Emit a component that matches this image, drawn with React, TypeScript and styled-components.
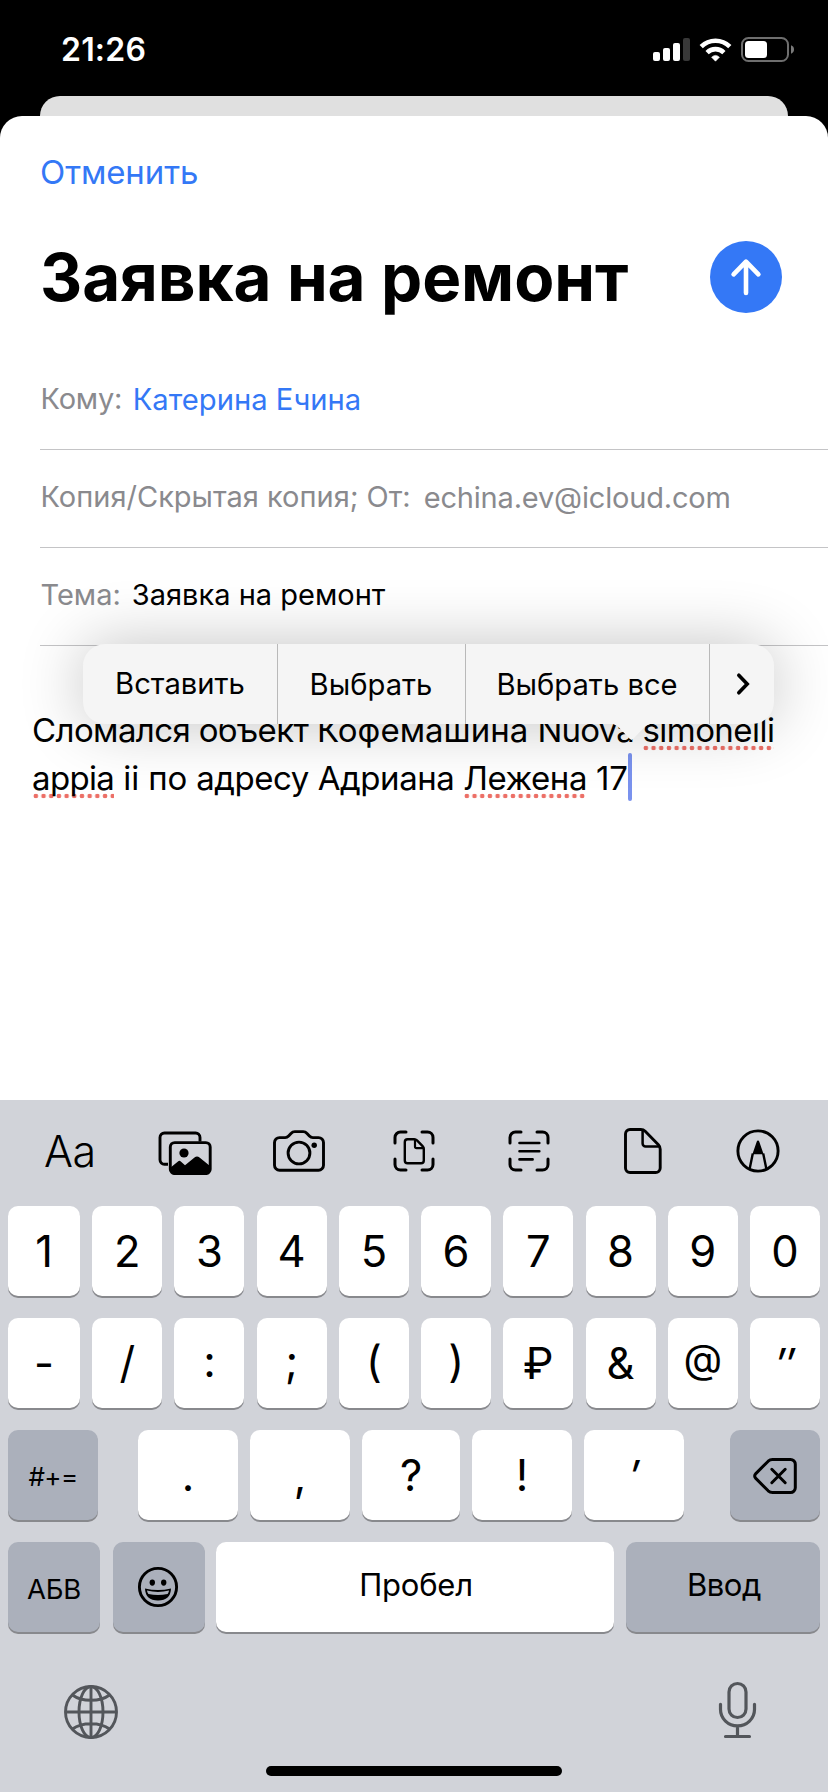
import React from "react";
import styled, { createGlobalStyle, css } from "styled-components";

const GlobalStyle = createGlobalStyle`
  html, body { margin: 0; padding: 0; background: #000; }
  * { box-sizing: border-box; }
  body {
    font-family: Inter, "Liberation Sans", sans-serif;
    -webkit-font-smoothing: antialiased;
  }
`;

const blue = "#3478f6";
const grey = "#8a8a8e";

const Screen = styled.div`
  width: 828px;
  height: 1792px;
  display: flex;
  flex-direction: column;
  background: #000;
  overflow: hidden;
`;

const StatusBar = styled.header`
  height: 96px;
  flex: none;
  display: flex;
  align-items: center;
  justify-content: space-between;
  padding: 3px 34px 0 61px;
  color: #fff;
`;

const Txt = styled.span<{
  $size: number;
  $track?: number;
  $weight?: number;
  $color?: string;
  $dy?: number;
  $italic?: boolean;
}>`
  font-size: ${(p) => p.$size}px;
  letter-spacing: ${(p) => p.$track ?? 0}px;
  font-weight: ${(p) => p.$weight ?? 400};
  font-style: ${(p) => (p.$italic ? "italic" : "normal")};
  color: ${(p) => p.$color ?? "inherit"};
  white-space: nowrap;
  line-height: 1.2;
  ${(p) => p.$dy && css`transform: translateY(${p.$dy}px);`}
`;

const BackCard = styled.div`
  height: 20px;
  flex: none;
  margin: 0 40px;
  background: #e0e0e0;
  border-radius: 20px 20px 0 0;
`;

const Sheet = styled.main`
  position: relative;
  height: 984px;
  flex: none;
  display: flex;
  flex-direction: column;
  background: #fff;
  border-radius: 22px 22px 0 0;
`;

const CancelButton = styled.button`
  align-self: flex-start;
  height: 40px;
  margin: 37px 0 0 40px;
  padding: 0;
  border: 0;
  background: none;
  font-family: inherit;
  display: flex;
  align-items: center;
  color: ${blue};
`;

const Heading = styled.div`
  height: 80px;
  margin: 44px 46px 35px 40px;
  display: flex;
  align-items: center;
  justify-content: space-between;
`;

const Title = styled.h1`
  margin: 0;
  padding-top: 1px;
  font-size: 65.5px;
  line-height: 80px;
  font-weight: 700;
  letter-spacing: -0.1px;
  white-space: nowrap;
`;

const SendButton = styled.button`
  width: 72px;
  height: 72px;
  padding: 0;
  border: 0;
  border-radius: 50%;
  background: ${blue};
  display: flex;
  align-items: center;
  justify-content: center;
`;

const Field = styled.div<{ $gap: number }>`
  height: 98px;
  margin-left: 40px;
  padding: 0 0 2px 0.5px;
  border-bottom: 1px solid #c4c4c6;
  display: flex;
  align-items: center;
  gap: ${(p) => p.$gap}px;
`;

const MessageBody = styled.div`
  padding: 60px 0 0 32px;
  color: #000;
`;

const Line = styled.div`
  height: 48px;
  display: flex;
  align-items: center;
  font-size: 33px;
  line-height: 48px;
  white-space: pre;
`;

const Run = styled.span<{ $track: number }>`
  letter-spacing: ${(p) => p.$track}px;
`;

const Misspelt = styled(Run)`
  height: 48px;
  background: radial-gradient(circle at center, #ec6f66 2px, transparent 2.6px) 0 39px / 7.7px 6px repeat-x;
`;

const Caret = styled.span`
  width: 4px;
  height: 48px;
  margin-bottom: 3px;
  border-radius: 2px;
  background: #7a92ee;
`;

const EditMenu = styled.div`
  position: absolute;
  left: 83px;
  top: 528px;
  width: 691px;
  height: 80px;
  display: flex;
  border-radius: 22px;
  background: #f5f5f5;
  box-shadow: 0 0 64px rgba(0, 0, 0, 0.24);
`;

const MenuItem = styled.div<{ $w: number; $pad?: string }>`
  width: ${(p) => p.$w}px;
  padding: ${(p) => p.$pad ?? "0"};
  display: flex;
  align-items: center;
  justify-content: center;
  color: #000;
  & + & { border-left: 1px solid #b9b9b9; }
`;

const MenuPointer = styled.div`
  position: absolute;
  left: 530px;
  top: 80px;
  width: 37px;
  height: 16px;
  background: #f5f5f5;
  clip-path: polygon(0 0, 100% 0, 88% 12%, 55% 92%, 50% 100%, 45% 92%, 12% 12%);
`;

const Keyboard = styled.section`
  flex: 1;
  display: flex;
  flex-direction: column;
  background: #d1d3d9;
`;

const Toolbar = styled.div`
  height: 106px;
  padding: 0 12.5px 4px;
  display: flex;
`;

const Tool = styled.div<{ $drop?: number }>`
  flex: 1;
  padding-top: ${(p) => p.$drop ?? 0}px;
  display: flex;
  align-items: center;
  justify-content: center;
`;

const KeyRow = styled.div<{ $spread?: boolean }>`
  height: 90px;
  margin-bottom: 22px;
  padding: 0 8px;
  display: flex;
  justify-content: ${(p) => (p.$spread ? "space-between" : "flex-start")};
`;

const KeyGroup = styled.div`
  display: flex;
  gap: 12px;
  margin: 0 46px 0 40px;
`;

const Key = styled.div<{ $w: number; $dark?: boolean; $ml?: number; $pad?: string }>`
  width: ${(p) => p.$w}px;
  height: 90px;
  flex: none;
  margin-left: ${(p) => p.$ml ?? 0}px;
  padding: ${(p) => p.$pad ?? "0"};
  display: flex;
  align-items: center;
  justify-content: center;
  border-radius: 10px;
  background: ${(p) => (p.$dark ? "#abb0bb" : "#fff")};
  box-shadow: 0 2px 0 #88898d;
  color: #000;
`;

const BottomBar = styled.div`
  height: 112px;
  display: flex;
  align-items: center;
  justify-content: space-between;
  padding: 0 71px 0 63px;
`;

const HomeIndicator = styled.div`
  width: 296px;
  height: 10px;
  margin: 0 auto;
  border-radius: 5px;
  background: #000;
`;

const StatusIcons = () => (
  <svg width="142" height="26" viewBox="652 37 142 26" fill="none">
    <g fill="#fff">
      <rect x="653" y="52" width="7" height="9" rx="2" />
      <rect x="663" y="48" width="7" height="13" rx="2" />
      <rect x="673" y="43" width="7" height="18" rx="2" />
      <rect x="683" y="38" width="7" height="23" rx="2" fillOpacity=".22" />
      <path d="M715.5 61.2 L711.6 57.2 Q715.5 53.6 719.4 57.2 Z" stroke="#fff" strokeWidth=".6" strokeLinejoin="round" />
    </g>
    <g stroke="#fff" strokeWidth="4.6">
      <path d="M701.2 46.6 A20.4 20.4 0 0 1 729.8 46.6" />
      <path d="M707.1 52.6 A12 12 0 0 1 723.9 52.6" />
    </g>
    <rect x="742" y="38" width="46" height="23" rx="6.5" stroke="#6e6e6e" strokeWidth="2" />
    <rect x="745" y="41" width="22" height="17" rx="3.5" fill="#fff" />
    <path d="M791 45.3 Q794 46.4 794 49.5 Q794 52.6 791 53.7 Z" fill="#7a7a7a" />
  </svg>
);

const ArrowUp = () => (
  <svg width="36" height="40" viewBox="0 0 36 40" fill="none" stroke="#fff" strokeWidth="4.6" strokeLinecap="round" strokeLinejoin="round">
    <path d="M18 36V4.8M5.6 17.4L18 4.6L30.4 17.4" />
  </svg>
);

const Chevron = () => (
  <svg width="16" height="26" viewBox="0 0 16 26" fill="none" stroke="#000" strokeWidth="3.6" strokeLinecap="round" strokeLinejoin="miter">
    <path d="M3.8 4.2L12.2 13L3.8 21.8" />
  </svg>
);

const PhotosIcon = () => (
  <svg width="54" height="44" viewBox="0 0 54 44" fill="none" stroke="#000" strokeWidth="2.9" strokeLinejoin="round">
    <path d="M42 10.5V6.4A4.4 4.4 0 0 0 37.6 2H6.4A4.4 4.4 0 0 0 2 6.4V28.8A4.4 4.4 0 0 0 6.4 33.2H10" />
    <rect x="12.3" y="11.6" width="39.9" height="31" rx="4.4" />
    <circle cx="26" cy="22" r="4.6" fill="#000" stroke="none" />
    <path d="M12.6 36.5L20 30.4Q21.4 29.2 22.8 30.4L27 34.2L36.5 26.4Q39 24.6 41.5 26.4L52 35V39Q52 42.6 47.5 42.6H17Q12.6 42.6 12.6 38.5Z" fill="#000" stroke="none" />
  </svg>
);

const CameraIcon = () => (
  <svg width="52" height="42" viewBox="0 0 52 42" fill="none" stroke="#000" strokeWidth="2.9" strokeLinejoin="round">
    <path d="M6.5 7.6H12.2Q14.2 7.6 15.6 6.1L18.2 3.3Q19.7 1.6 21.8 1.6H30.2Q32.3 1.6 33.8 3.3L36.4 6.1Q37.8 7.6 39.8 7.6H45.5A5 5 0 0 1 50.5 12.6V35.3A5 5 0 0 1 45.5 40.3H6.5A5 5 0 0 1 1.5 35.3V12.6A5 5 0 0 1 6.5 7.6Z" />
    <circle cx="26" cy="23" r="10.9" />
    <circle cx="41.2" cy="15.2" r="2.7" fill="#000" stroke="none" />
  </svg>
);

const corners = "M2 13V7.5A5.5 5.5 0 0 1 7.5 2H13M29 2H34.5A5.5 5.5 0 0 1 40 7.5V13M40 29V34.5A5.5 5.5 0 0 1 34.5 40H29M13 40H7.5A5.5 5.5 0 0 1 2 34.5V29";

const ScanDocumentIcon = () => (
  <svg width="42" height="42" viewBox="0 0 42 42" fill="none" stroke="#000" strokeLinecap="round" strokeLinejoin="round">
    <path strokeWidth="3" d={corners} />
    <path strokeWidth="2.4" d="M14.6 9.2H21.2Q22.8 9.2 24 10.4L29.6 16.2Q30.8 17.4 30.8 19V30.4A2.8 2.8 0 0 1 28 33.2H14.6A2.8 2.8 0 0 1 11.8 30.4V12A2.8 2.8 0 0 1 14.6 9.2Z" />
    <path strokeWidth="2.2" d="M22 9.8V16.6A1.6 1.6 0 0 0 23.6 18.2H30.4" />
  </svg>
);

const ScanTextIcon = () => (
  <svg width="42" height="42" viewBox="0 0 42 42" fill="none" stroke="#000" strokeLinecap="round" strokeLinejoin="round" strokeWidth="3">
    <path d={corners} />
    <path strokeWidth="2.6" d="M11.5 13H31.3M11.5 21.2H31.3M11.5 29.4H24.6" />
  </svg>
);

const FileIcon = () => (
  <svg width="38" height="46" viewBox="0 0 38 46" fill="none" stroke="#000" strokeWidth="2.9" strokeLinejoin="round">
    <path d="M6 1.5H16.8Q19.4 1.5 21.2 3.3L34.4 16.8Q36.2 18.6 36.2 21.2V40A4.5 4.5 0 0 1 31.7 44.5H6A4.5 4.5 0 0 1 1.5 40V6A4.5 4.5 0 0 1 6 1.5Z" />
    <path strokeWidth="2.5" d="M18.6 2V15.5A3 3 0 0 0 21.6 18.5H35.4" />
  </svg>
);

const MarkupIcon = () => (
  <svg width="44" height="44" viewBox="0 0 44 44" fill="none" stroke="#000" strokeWidth="2.9">
    <circle cx="22" cy="22" r="20.1" />
    <path d="M22 11.5Q22.9 11.5 23.3 12.8L27.6 25.2H16.4L20.7 12.8Q21.1 11.5 22 11.5Z" fill="#000" stroke="none" />
    <path strokeWidth="2.4" d="M16.8 24.5L13.6 40M27.2 24.5L30.4 40" />
  </svg>
);

const DeleteIcon = () => (
  <svg width="44" height="36" viewBox="0 0 44 36" fill="none" stroke="#000" strokeWidth="3" strokeLinecap="round" strokeLinejoin="round">
    <path d="M19.5 1.5H37.5A4.8 4.8 0 0 1 42.3 6.3V29.7A4.8 4.8 0 0 1 37.5 34.5H19.5Q17 34.5 15.2 32.8L2.8 20.4Q.6 18 2.8 15.6L15.2 3.2Q17 1.5 19.5 1.5Z" />
    <path d="M18.8 11.3L32.2 24.7M32.2 11.3L18.8 24.7" />
  </svg>
);

const EmojiIcon = () => (
  <svg width="42" height="42" viewBox="0 0 42 42" fill="none">
    <circle cx="21" cy="21" r="18.6" stroke="#000" strokeWidth="2.9" />
    <ellipse cx="15.3" cy="16.6" rx="2.7" ry="3.1" fill="#000" />
    <ellipse cx="26.7" cy="16.6" rx="2.7" ry="3.1" fill="#000" />
    <path d="M8 22.6Q21 25.6 34 22.6Q33.6 34.6 21 34.6Q8.4 34.6 8 22.6Z" fill="#000" />
    <path d="M9.9 24.6Q21 27.2 32.1 24.6Q31.6 26.8 30.6 28Q21 30 11.4 28Q10.4 26.8 9.9 24.6Z" fill="#abb0bb" />
  </svg>
);

const GlobeIcon = () => (
  <svg width="56" height="60" viewBox="0 -4 56 60" fill="none" stroke="#53565b" strokeWidth="2.9">
    <circle cx="28" cy="28" r="25.5" />
    <ellipse cx="28" cy="28" rx="12" ry="25.5" />
    <path d="M28 2.4V53.6M2.4 28H53.6M9.5 11Q16.5 16.3 28 16.3Q39.5 16.3 46.5 11M9.5 45Q16.5 39.7 28 39.7Q39.5 39.7 46.5 45" />
  </svg>
);

const MicIcon = () => (
  <svg width="40" height="58" viewBox="0 0 40 58" fill="none" stroke="#53565b" strokeWidth="3.2" strokeLinecap="round">
    <rect x="12" y="2.500" width="17" height="34" rx="8.500" />
    <path d="M3.500 23.300V28.500A17 16.400 0 0 0 37.500 28.500V23.300M20.500 45V55.500M8.500 55.500H32.500" />
  </svg>
);

type Glyph = { label: string; size?: number; dy?: number; italic?: boolean };

const digits: Glyph[] = ["1", "2", "3", "4", "5", "6", "7", "8", "9", "0"].map((label) => ({ label }));

const symbols: Glyph[] = [
  { label: "-" },
  { label: "/", dy: -1 },
  { label: ":", dy: -2 },
  { label: ";", dy: -2 },
  { label: "(", dy: -2 },
  { label: ")", dy: -2 },
  { label: "₽" },
  { label: "&" },
  { label: "@", size: 40, dy: -4 },
  { label: "″", dy: 1, italic: true },
];

const punctuation: Glyph[] = [
  { label: "." },
  { label: "," },
  { label: "?" },
  { label: "!" },
  { label: "′", dy: 1, italic: true },
];

const GlyphKey = ({ glyph, width }: { glyph: Glyph; width: number }) => (
  <Key $w={width}>
    <Txt $size={glyph.size ?? 43.5} $dy={glyph.dy} $italic={glyph.italic}>{glyph.label}</Txt>
  </Key>
);

export default function App() {
  return (
    <>
      <GlobalStyle />
      <Screen>
        <StatusBar>
          <Txt $size={32} $weight={600} $track={0.2} $dy={1}>21:26</Txt>
          <StatusIcons />
        </StatusBar>
        <BackCard />
        <Sheet>
          <CancelButton>
            <Txt $size={33} $track={-0.1}>Отменить</Txt>
          </CancelButton>
          <Heading>
            <Title>Заявка на ремонт</Title>
            <SendButton><ArrowUp /></SendButton>
          </Heading>
          <Field $gap={10.5}>
            <Txt $size={29} $track={-0.2} $color={grey}>Кому:</Txt>
            <Txt $size={29.2} $color={blue}>Катерина Ечина</Txt>
          </Field>
          <Field $gap={13}>
            <Txt $size={29} $color={grey}>Копия/Скрытая копия; От:</Txt>
            <Txt $size={29} $track={-0.18} $color={grey} $dy={1}>echina.ev@icloud.com</Txt>
          </Field>
          <Field $gap={11}>
            <Txt $size={29} $color={grey}>Тема:</Txt>
            <Txt $size={29}>Заявка на ремонт</Txt>
          </Field>
          <MessageBody>
            <Line>
              <Run $track={-0.6}>Сломался объект </Run>
              <Run $track={0}>Кофемашина </Run>
              <Run $track={-0.8}>Nuova </Run>
              <Misspelt $track={-0.55}>simonelli</Misspelt>
            </Line>
            <Line>
              <Misspelt $track={-0.65}>appia</Misspelt>
              <Run $track={-0.15}> ii по </Run>
              <Run $track={-0.45}>адресу Адриана </Run>
              <Misspelt $track={-0.45}>Лежена</Misspelt>
              <Run $track={-0.2}> 17</Run>
              <Caret />
            </Line>
          </MessageBody>
          <EditMenu>
            <MenuItem $w={194}><Txt $size={29.2}>Вставить</Txt></MenuItem>
            <MenuItem $w={188} $pad="0 1px 0 0"><Txt $size={29.2} $dy={1}>Выбрать</Txt></MenuItem>
            <MenuItem $w={244} $pad="0 1px 0 0"><Txt $size={29.2} $dy={1}>Выбрать все</Txt></MenuItem>
            <MenuItem $w={65} $pad="0 0 0 2px"><Chevron /></MenuItem>
            <MenuPointer />
          </EditMenu>
        </Sheet>
        <Keyboard>
          <Toolbar>
            <Tool><Txt $size={43} $weight={300} $track={-0.5} $dy={1}>Aa</Txt></Tool>
            <Tool $drop={4}><PhotosIcon /></Tool>
            <Tool><CameraIcon /></Tool>
            <Tool><ScanDocumentIcon /></Tool>
            <Tool><ScanTextIcon /></Tool>
            <Tool><FileIcon /></Tool>
            <Tool><MarkupIcon /></Tool>
          </Toolbar>
          <KeyRow $spread>
            {digits.map((g, i) => (
              <GlyphKey key={g.label} glyph={g} width={i === 0 ? 72 : 70} />
            ))}
          </KeyRow>
          <KeyRow $spread>
            {symbols.map((g, i) => (
              <GlyphKey key={g.label} glyph={g} width={i === 0 ? 72 : 70} />
            ))}
          </KeyRow>
          <KeyRow>
            <Key $w={90} $dark><Txt $size={26} $track={-0.6} $dy={2}>#+=</Txt></Key>
            <KeyGroup>
              {punctuation.map((g, i) => (
                <GlyphKey key={g.label} glyph={g} width={i === 2 ? 98 : 100} />
              ))}
            </KeyGroup>
            <Key $w={90} $pad="2px 0 0" $dark><DeleteIcon /></Key>
          </KeyRow>
          <KeyRow>
            <Key $w={92} $dark><Txt $size={27.5} $track={-0.3} $dy={1.5}>АБВ</Txt></Key>
            <Key $w={92} $ml={13} $pad="0 2px 0 0" $dark><EmojiIcon /></Key>
            <Key $w={398} $ml={11} $pad="0 0 0 2px"><Txt $size={31} $track={-0.2} $dy={-2}>Пробел</Txt></Key>
            <Key $w={194} $ml={12} $pad="0 0 0 2px" $dark><Txt $size={31} $track={-0.5} $dy={-2}>Ввод</Txt></Key>
          </KeyRow>
          <BottomBar>
            <GlobeIcon />
            <MicIcon />
          </BottomBar>
          <HomeIndicator />
        </Keyboard>
      </Screen>
    </>
  );
}
